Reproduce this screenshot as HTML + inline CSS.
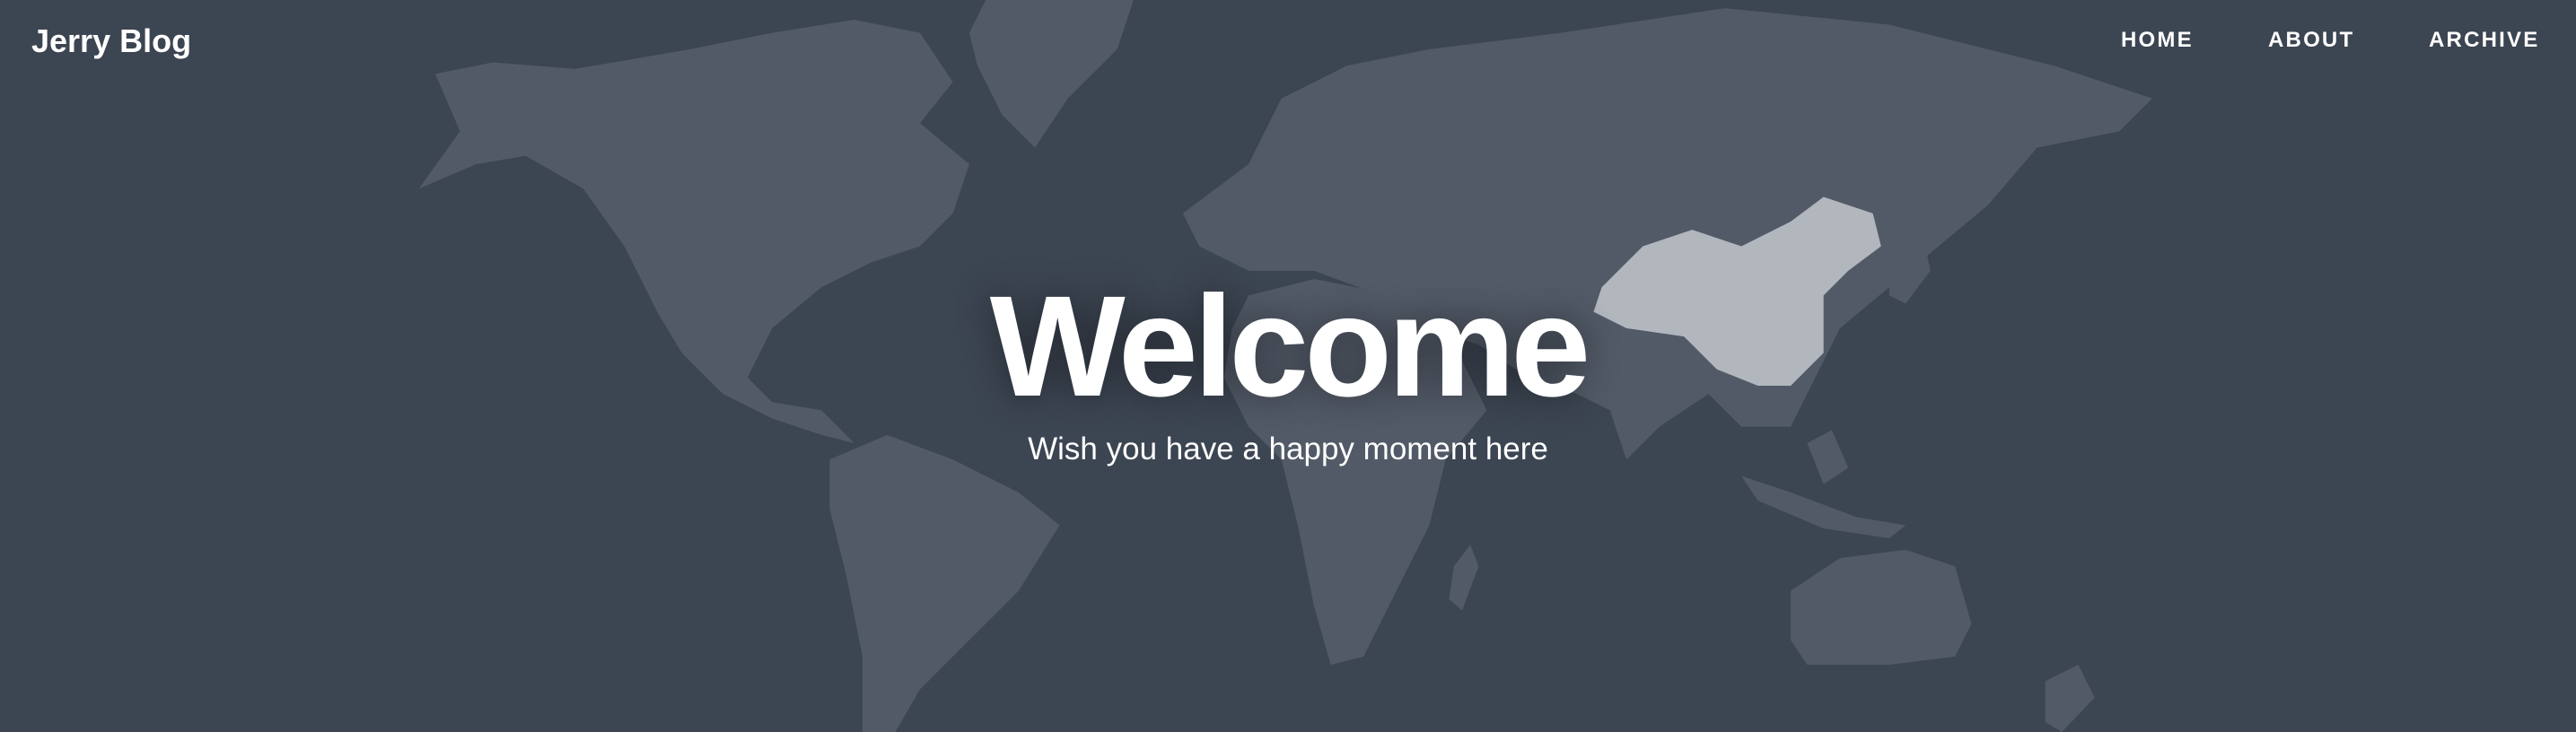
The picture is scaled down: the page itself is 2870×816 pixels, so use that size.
<!DOCTYPE html>
<html><head><meta charset="utf-8"><style>
html,body{margin:0;padding:0;}
body{width:2870px;height:816px;background:#3c4552;position:relative;overflow:hidden;font-family:"Liberation Sans",Arial,sans-serif;}
svg{position:absolute;left:0;top:0;}
.logo{position:absolute;left:35px;top:24px;font-size:36px;font-weight:bold;color:#fff;line-height:44px;}
.nav{position:absolute;top:30px;font-size:24px;font-weight:bold;color:#fff;letter-spacing:2.2px;line-height:30px;}
h1{position:absolute;left:0;width:2870px;text-align:center;top:296px;margin:0;font-size:160px;font-weight:bold;color:#fff;letter-spacing:-5px;line-height:180px;text-shadow:0 0 40px rgba(0,0,0,.45);}
.sub{position:absolute;left:0;width:2870px;text-align:center;top:479px;font-size:35px;color:#fff;line-height:44px;}
</style></head><body>
<svg width="2870" height="816" viewBox="0 0 1568 446" preserveAspectRatio="none">
<g fill="#525a67">
<polygon points="255,115 280,80 265,45 300,38 350,42 420,30 470,20 520,12 560,20 580,50 560,75 590,100 580,130 560,150 530,160 500,175 470,200 455,230 470,245 500,250 520,270 500,265 470,255 440,240 415,215 400,190 380,150 355,115 320,95 290,100"/>
<polygon points="590,20 600,0 690,0 680,30 650,60 630,90 610,70 595,40"/>
<polygon points="505,280 540,265 580,280 620,300 645,320 620,360 590,390 560,420 545,446 525,446 525,400 515,350 505,310"/>
<polygon points="720,130 760,100 780,60 820,40 870,30 950,20 1050,5 1150,15 1250,40 1310,60 1290,80 1240,90 1210,125 1180,150 1150,175 1120,200 1100,240 1090,260 1060,260 1040,240 1010,260 990,280 980,250 960,240 930,230 900,210 870,200 840,180 800,165 760,165 730,150"/>
<polygon points="760,180 800,170 850,180 880,200 905,250 880,280 870,320 850,360 830,400 810,405 800,370 790,320 780,280 760,260 745,230 750,200"/>
<polygon points="1090,360 1120,340 1160,335 1190,345 1200,380 1190,400 1150,405 1100,405 1090,390"/>
<polygon points="885,345 895,332 900,345 890,372 882,365"/>
<polygon points="1060,290 1090,300 1130,315 1160,320 1150,328 1110,322 1070,305"/>
<polygon points="1100,270 1115,262 1125,285 1110,295"/>
<polygon points="1150,150 1170,140 1175,165 1160,185 1150,180"/>
<polygon points="1245,415 1265,405 1275,425 1255,446 1245,440"/>
</g>
<polygon fill="#b2b6bd" points="975,175 1000,150 1030,140 1060,150 1090,135 1110,120 1140,130 1145,150 1125,165 1110,180 1110,215 1090,235 1070,235 1045,225 1025,205 990,200 970,190"/>
</svg>
<div class="logo">Jerry Blog</div>
<div class="nav" style="left:2363px">HOME</div>
<div class="nav" style="left:2527px">ABOUT</div>
<div class="nav" style="left:2706px">ARCHIVE</div>
<h1>Welcome</h1>
<div class="sub">Wish you have a happy moment here</div>
</body></html>
